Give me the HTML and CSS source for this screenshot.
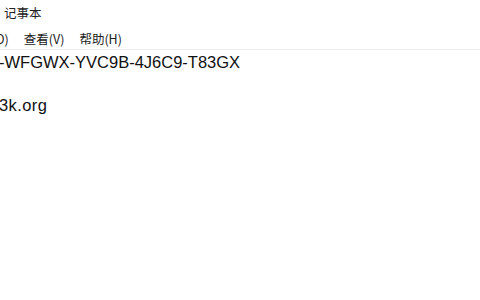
FILE: index.html
```html
<!DOCTYPE html>
<html lang="zh">
<head>
    <meta charset="UTF-8">
    <title>记事本</title>
    <link rel="stylesheet" href="styles.css">
</head>
<body>
    <div class="window">
        <!-- Title bar -->
        <div class="title-bar">
            <span class="title">记事本</span>
        </div>

        <!-- Menu bar -->
        <div class="menu-bar">
            <div class="menu-row">
                <span class="menu-item">格式(O)</span>
                <span class="menu-item">查看(V)</span>
                <span class="menu-item">帮助(H)</span>
            </div>
        </div>

        <!-- Text area -->
        <div class="editor">
            <div class="line">-WFGWX-YVC9B-4J6C9-T83GX</div>
            <div class="line">&nbsp;</div>
            <div class="line">3k.org</div>
        </div>
    </div>
</body>
</html>
```

FILE: styles.css
```css
* {
  margin: 0;
  padding: 0;
  box-sizing: border-box;
}

body {
  background-color: #fff;
  width: 480px;
  height: 300px;
  overflow: hidden;
  font-family: "Liberation Sans", "Noto Sans CJK SC", sans-serif;
  color: #1a1a1a;
}

.window {
  display: flex;
  flex-direction: column;
  height: 100%;
}

.title-bar {
  height: 27px;
  padding: 4px 0 0 4px;
}

.title {
  font-family: "Noto Sans CJK SC", sans-serif;
  font-size: 12.5px;
  line-height: 17px;
  color: #222;
}

.menu-bar {
  height: 23px;
  overflow: hidden;
  border-bottom: 1px solid #ececec;
}

.menu-row {
  display: flex;
  gap: 15px;
  margin-left: -34px;
  padding-top: 4px;
  white-space: nowrap;
}

.menu-item {
  font-family: "Noto Sans CJK SC", sans-serif;
  font-size: 12.5px;
  line-height: 16px;
  color: #222;
}

.editor {
  padding-top: 2px;
  margin-left: -1px;
}

.line {
  font-size: 16.5px;
  line-height: 21.5px;
  color: #111;
  white-space: pre;
}

.line:last-child {
  letter-spacing: 0.4px;
}
```
